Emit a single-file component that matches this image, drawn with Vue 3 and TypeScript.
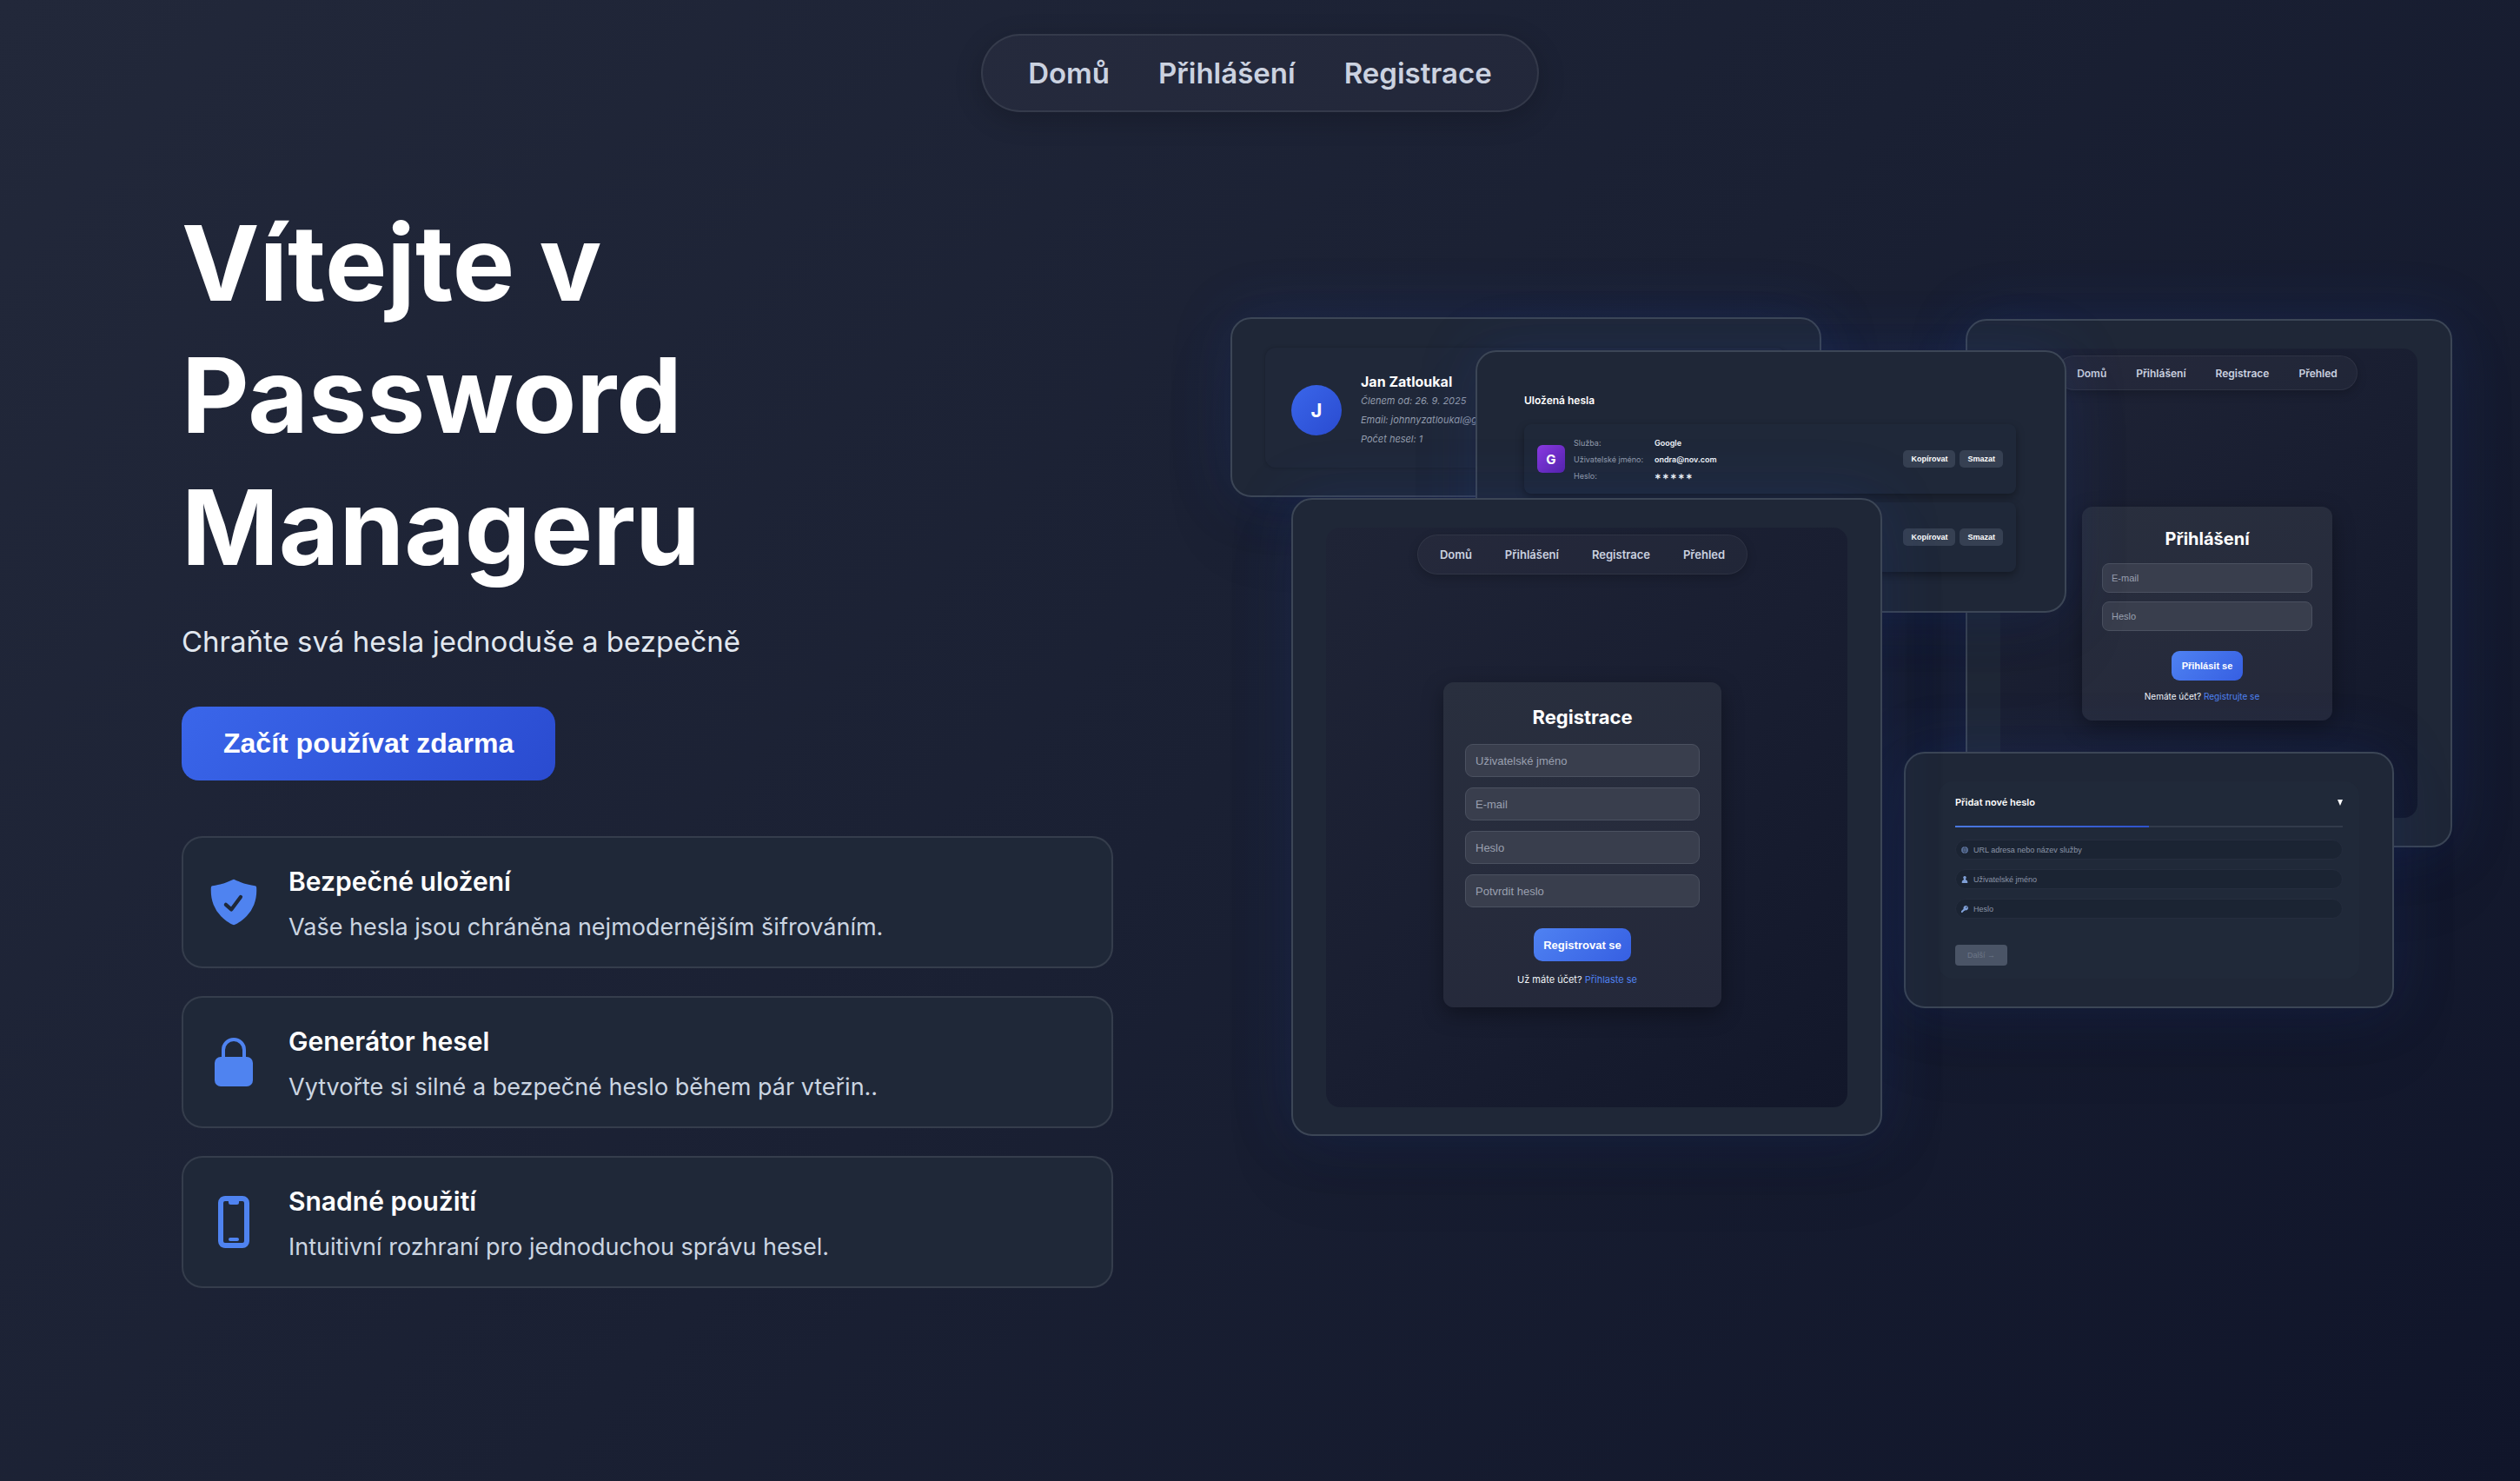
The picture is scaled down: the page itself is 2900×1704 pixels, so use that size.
<script setup lang="ts">
interface Feature {
  icon: 'shield' | 'lock' | 'phone'
  title: string
  text: string
}

const navLinks: string[] = ['Domů', 'Přihlášení', 'Registrace']
const appLinks: string[] = [...navLinks, 'Přehled']

const features: Feature[] = [
  { icon: 'shield', title: 'Bezpečné uložení', text: 'Vaše hesla jsou chráněna nejmodernějším šifrováním.' },
  { icon: 'lock', title: 'Generátor hesel', text: 'Vytvořte si silné a bezpečné heslo během pár vteřin..' },
  { icon: 'phone', title: 'Snadné použití', text: 'Intuitivní rozhraní pro jednoduchou správu hesel.' },
]

const registerFields: string[] = ['Uživatelské jméno', 'E-mail', 'Heslo', 'Potvrdit heslo']
const loginFields: string[] = ['E-mail', 'Heslo']
</script>

<template>
  <div class="page">
    <header class="top">
      <nav class="pill">
        <a v-for="link in navLinks" :key="link" href="#">{{ link }}</a>
      </nav>
    </header>

    <main class="hero">
      <section class="intro">
        <h1>Vítejte v Password Manageru</h1>
        <p class="lead">Chraňte svá hesla jednoduše a bezpečně</p>
        <button type="button" class="cta">Začít používat zdarma</button>

        <ul class="features">
          <li v-for="f in features" :key="f.title" class="feature">
            <svg v-if="f.icon === 'shield'" class="feature-icon" viewBox="0 0 512 512" aria-hidden="true">
              <path fill="currentColor" d="M479.07 111.36a16 16 0 00-13.15-14.74c-86.5-15.52-122.61-26.74-203.33-63.2a16 16 0 00-13.18 0C168.69 69.88 132.58 81.1 46.08 96.62a16 16 0 00-13.15 14.74c-3.85 61.11 4.36 118.05 24.43 169.24A349.47 349.47 0 00129 393.11c53.47 56.73 110.24 81.37 121.07 85.73a16 16 0 0012 0c10.83-4.36 67.6-29 121.07-85.73A349.47 349.47 0 00454.64 280.6c20.07-51.19 28.28-108.13 24.43-169.24z" />
              <path fill="none" stroke="#1f2838" stroke-width="36" stroke-linecap="round" stroke-linejoin="round" d="M178 280l54 48 92-124" />
            </svg>
            <svg v-else-if="f.icon === 'lock'" class="feature-icon" viewBox="0 0 60 60" aria-hidden="true">
              <path fill="none" stroke="currentColor" stroke-width="4" d="M18 26V16a12 12 0 0 1 24 0v10" />
              <rect x="8" y="24" width="44" height="34" rx="7" fill="currentColor" />
            </svg>
            <svg v-else class="feature-icon" viewBox="0 0 60 60" aria-hidden="true">
              <rect x="15" y="3" width="30" height="54" rx="5" fill="none" stroke="currentColor" stroke-width="6" />
              <path fill="currentColor" d="M22 5h16c-2 0-2 1.500-2 2.500a2.500 2.500 0 0 1-2.500 2.500h-7a2.500 2.500 0 0 1-2.500-2.500C24 6.500 24 5 22 5z" />
              <rect x="24" y="48" width="12" height="4" rx="2" fill="currentColor" />
            </svg>
            <div>
              <h2>{{ f.title }}</h2>
              <p>{{ f.text }}</p>
            </div>
          </li>
        </ul>
      </section>

      <section class="stage" aria-label="Ukázky aplikace">
        <article class="window profile">
          <div class="profile-inner">
            <span class="avatar">J</span>
            <div class="profile-text">
              <h3>Jan Zatloukal</h3>
              <p>Členem od: 26. 9. 2025</p>
              <p>Email: johnnyzatloukal@g</p>
              <p>Počet hesel: 1</p>
            </div>
          </div>
        </article>

        <article class="window login">
          <div class="screen">
            <nav class="pill small">
              <a v-for="link in appLinks" :key="link" href="#">{{ link }}</a>
            </nav>
            <form class="panel" @submit.prevent>
              <h3>Přihlášení</h3>
              <input v-for="f in loginFields" :key="f" type="text" :placeholder="f" :aria-label="f" />
              <button type="submit">Přihlásit se</button>
              <p>Nemáte účet? <a href="#">Registrujte se</a></p>
            </form>
          </div>
        </article>

        <article class="window vault">
          <h3>Uložená hesla</h3>
          <div class="entry">
            <span class="logo">G</span>
            <dl>
              <dt>Služba:</dt>
              <dd>Google</dd>
              <dt>Uživatelské jméno:</dt>
              <dd>ondra@nov.com</dd>
              <dt>Heslo:</dt>
              <dd class="stars"><span v-for="n in 5" :key="n">∗</span></dd>
            </dl>
            <button type="button">Kopírovat</button>
            <button type="button">Smazat</button>
          </div>
          <div class="entry">
            <dl></dl>
            <button type="button">Kopírovat</button>
            <button type="button">Smazat</button>
          </div>
        </article>

        <article class="window add">
          <form class="add-inner" @submit.prevent>
            <div class="add-head">
              <h3>Přidat nové heslo</h3>
              <svg viewBox="0 0 6 7" width="6" height="7" aria-hidden="true"><path d="M0 0h6L3 7z" fill="#fff" /></svg>
            </div>
            <div class="progress"><span></span></div>
            <label class="field">
              <svg viewBox="0 0 16 16" aria-hidden="true">
                <circle cx="8" cy="8" r="7.500" fill="#7590c4" />
                <path d="M8 1v14M1 8h14M2 4.500h12M2 11.500h12M8 1C3.500 5 3.500 11 8 15c4.500-4 4.500-10 0-14" fill="none" stroke="#1b2433" />
              </svg>
              <input type="text" placeholder="URL adresa nebo název služby" aria-label="URL adresa nebo název služby" />
            </label>
            <label class="field">
              <svg viewBox="0 0 16 16" aria-hidden="true">
                <path d="M8 0a3.500 3.500 0 0 0-2 6.400L5.500 8.500C3 9.500 1.500 11 1.500 13.500V16h13v-2.500c0-2.500-1.500-4-4-5L10 6.400A3.500 3.500 0 0 0 8 0z" fill="#7f9fd6" />
              </svg>
              <input type="text" placeholder="Uživatelské jméno" aria-label="Uživatelské jméno" />
            </label>
            <label class="field">
              <svg viewBox="0 0 16 16" aria-hidden="true">
                <path fill-rule="evenodd" d="M10.500 0a5.500 5.500 0 0 0-5.200 7.300L0 12.600V16h3.500v-2h2v-2h2l1.200-1.300A5.500 5.500 0 1 0 10.500 0zm1.500 2.600a1.500 1.500 0 1 1 0 3 1.500 1.500 0 0 1 0-3z" fill="#7f9fd6" />
              </svg>
              <input type="text" placeholder="Heslo" aria-label="Heslo" />
            </label>
            <button type="button" disabled>Další →</button>
          </form>
        </article>

        <article class="window register">
          <div class="screen">
            <nav class="pill small">
              <a v-for="link in appLinks" :key="link" href="#">{{ link }}</a>
            </nav>
            <form class="panel" @submit.prevent>
              <h3>Registrace</h3>
              <input v-for="f in registerFields" :key="f" type="text" :placeholder="f" :aria-label="f" />
              <button type="submit">Registrovat se</button>
              <p>Už máte účet? <a href="#">Přihlaste se</a></p>
            </form>
          </div>
        </article>
      </section>
    </main>
  </div>
</template>

<style>
body {
  margin: 0;
  background: #12172a;
}
</style>

<style scoped>
* {
  box-sizing: border-box;
}

h1,
h2,
h3,
p,
ul,
dl,
dd {
  margin: 0;
  padding: 0;
}

a {
  color: inherit;
  text-decoration: none;
}

button,
input {
  font-family: 'Liberation Sans', Arial, sans-serif;
}

.page {
  min-height: 100vh;
  padding-top: 39px;
  font-family: Inter, 'Noto Sans', sans-serif;
  color: #fff;
  background: linear-gradient(135deg, #22283a 0%, #1a2033 50%, #10152a 100%);
}

.top {
  display: flex;
  justify-content: center;
}

.pill {
  display: flex;
  align-items: center;
  gap: 56px;
  height: 90px;
  padding: 0 52px;
  border: 2px solid rgba(255, 255, 255, 0.08);
  border-radius: 45px;
  background: rgba(255, 255, 255, 0.03);
  box-shadow: 0 8px 32px rgba(0, 0, 0, 0.2);
  font-size: 33px;
  font-weight: 600;
  color: #cbd2e0;
}

.hero {
  display: grid;
  grid-template-columns: 1072fr 1406fr;
  gap: 135px;
  align-items: start;
  padding: 98px 78px 80px 209px;
}

h1 {
  max-width: 640px;
  font-size: 120px;
  line-height: 152px;
  font-weight: 700;
}

.lead {
  margin-top: 28px;
  font-size: 33px;
  line-height: 54px;
  color: #e2e8f0;
}

.cta {
  display: block;
  margin-top: 48px;
  height: 85px;
  padding: 0 48px;
  border: 0;
  border-radius: 20px;
  background: linear-gradient(135deg, #3a66ea, #2a4bd0);
  color: #fff;
  font-size: 32px;
  font-weight: 700;
}

.features {
  display: flex;
  flex-direction: column;
  gap: 32px;
  margin-top: 64px;
  list-style: none;
}

.feature {
  display: flex;
  align-items: flex-start;
  gap: 33px;
  padding: 28px 28px 23px;
  border: 2px solid rgba(255, 255, 255, 0.1);
  border-radius: 24px;
  background: #1f2838;
}

.feature-icon {
  flex: none;
  width: 60px;
  height: 60px;
  margin-top: 16px;
  color: #4f83f0;
}

.feature h2 {
  font-size: 30px;
  line-height: 44px;
  font-weight: 600;
}

.feature p {
  margin-top: 9px;
  font-size: 27px;
  line-height: 44px;
  color: #cbd5e1;
}

.stage {
  position: relative;
  height: 942px;
  margin-top: 138px;
}

.window {
  position: absolute;
  border: 2px solid #3c4656;
  border-radius: 24px;
  background: #1f2737;
  box-shadow:
    0 0 70px rgba(37, 80, 190, 0.18),
    0 40px 80px rgba(0, 0, 0, 0.12);
}

.profile {
  top: 0;
  left: 0;
  width: 680px;
  height: 207px;
  padding: 33px 38px;
}

.profile-inner {
  display: flex;
  align-items: center;
  gap: 22px;
  height: 138px;
  padding: 6px 30px 0;
  border-radius: 12px;
  background: #202839;
  box-shadow: 0 0 4px rgba(0, 0, 0, 0.2);
}

.avatar {
  display: flex;
  align-items: center;
  justify-content: center;
  width: 58px;
  height: 58px;
  border-radius: 50%;
  background: linear-gradient(135deg, #3a66ea, #2a4bd0);
  font-size: 22px;
  font-weight: 700;
}

.profile-text h3 {
  font-size: 16px;
  line-height: 22px;
  font-weight: 700;
}

.profile-text p {
  font-size: 11px;
  line-height: 22px;
  font-style: italic;
  color: #949dae;
}

.vault {
  top: 38px;
  left: 282px;
  width: 680px;
  height: 302px;
  padding: 46px 56px 46px 54px;
}

.vault h3 {
  margin-bottom: 17px;
  font-size: 12px;
  line-height: 20px;
  font-weight: 600;
}

.entry {
  display: flex;
  align-items: center;
  gap: 5px;
  height: 80px;
  margin-bottom: 10px;
  padding: 0 15px;
  border-radius: 8px;
  background: #1f2839;
  box-shadow: 0 4px 10px rgba(0, 0, 0, 0.35);
}

.logo {
  display: flex;
  align-items: center;
  justify-content: center;
  width: 32px;
  height: 32px;
  margin-right: 5px;
  border-radius: 6px;
  background: linear-gradient(135deg, #8a3ae2, #5522ad);
  font-size: 15px;
  font-weight: 700;
}

.entry dl {
  display: grid;
  grid-template-columns: 93px auto;
  flex: 1;
  justify-content: start;
  font-size: 9px;
  line-height: 19px;
}

.entry dt {
  color: #949dae;
}

.entry dd {
  font-weight: 600;
  color: #f1f5f9;
}

.stars {
  display: flex;
  gap: 2px;
}

.stars span {
  width: 7px;
  text-align: center;
}

.entry button {
  height: 20px;
  padding: 0 9px;
  border: 0;
  border-radius: 5px;
  background: #364052;
  color: #fff;
  font-size: 9px;
  font-weight: 700;
}

.register {
  top: 208px;
  left: 70px;
  width: 680px;
  height: 734px;
  padding: 32px 38px 31px;
}

.login {
  top: 2px;
  left: 846px;
  width: 560px;
  height: 608px;
  padding: 32px 38px;
}

.screen {
  display: flex;
  flex-direction: column;
  align-items: center;
  height: 100%;
  border-radius: 16px;
  background: linear-gradient(135deg, #1f2436, #191e31 50%, #12172a);
}

.register .screen {
  padding: 8px 10px 0 0;
}

.login .screen {
  padding: 8px 4px 0 0;
}

.pill.small {
  border-width: 1px;
  border-color: rgba(255, 255, 255, 0.06);
  box-shadow: 0 4px 12px rgba(0, 0, 0, 0.2);
}

.register .pill {
  gap: 38px;
  height: 46px;
  padding: 0 25px;
  font-size: 13px;
}

.login .pill {
  gap: 34px;
  height: 40px;
  padding: 0 22px;
  font-size: 12px;
}

.panel {
  display: flex;
  flex-direction: column;
  align-items: center;
  border-radius: 12px;
  background: linear-gradient(160deg, #292f3e, #24283a);
  box-shadow: 0 8px 24px rgba(0, 0, 0, 0.35);
}

.panel input {
  width: 100%;
  border: 1px solid #4b5160;
  background: #393e4d;
  color: #fff;
}

.panel input::placeholder {
  color: #9aa0b0;
}

.panel button {
  border: 0;
  background: linear-gradient(135deg, #4f82f2, #365fe2);
  color: #fff;
  font-weight: 700;
}

.panel p {
  color: #f1f5f9;
}

.panel p a {
  color: #4f82f2;
}

.register .panel {
  width: 320px;
  margin-top: 124px;
  padding: 25px 25px 20px;
}

.register .panel h3 {
  margin-bottom: 16px;
  font-size: 22px;
  line-height: 30px;
}

.register .panel input {
  height: 38px;
  margin-bottom: 12px;
  padding: 0 11px;
  border-radius: 9px;
  font-size: 13px;
}

.register .panel button {
  height: 38px;
  margin-top: 12px;
  padding: 0 11px;
  border-radius: 10px;
  font-size: 13px;
}

.register .panel p {
  margin-top: 9px;
  padding-right: 12px;
  font-size: 11px;
  line-height: 24px;
}

.login .panel {
  width: 288px;
  margin-top: 134px;
  padding: 24px 23px 17px;
}

.login .panel h3 {
  margin-bottom: 15px;
  font-size: 20px;
  line-height: 26px;
}

.login .panel input {
  height: 34px;
  margin-bottom: 10px;
  padding: 0 10px;
  border-radius: 8px;
  font-size: 11px;
}

.login .panel button {
  height: 34px;
  margin-top: 13px;
  padding: 0 12px;
  border-radius: 9px;
  font-size: 11px;
}

.login .panel p {
  margin-top: 7px;
  padding-right: 12px;
  font-size: 10px;
  line-height: 22px;
}

.add {
  top: 500px;
  left: 775px;
  width: 564px;
  padding: 32px 38px;
}

.add-inner {
  display: flex;
  flex-direction: column;
  align-items: flex-start;
  height: 227px;
  padding: 15px 19px;
  border-radius: 16px;
  background: #202939;
}

.add-head {
  display: flex;
  align-items: center;
  justify-content: space-between;
  width: 100%;
  height: 18px;
}

.add-head h3 {
  font-size: 11px;
  font-weight: 600;
}

.progress {
  width: 100%;
  height: 2px;
  margin: 18px 0 14px;
  background: #323b4b;
}

.progress span {
  display: block;
  width: 50%;
  height: 100%;
  background: linear-gradient(90deg, #4a78e0, #2f52cc);
}

.field {
  display: flex;
  align-items: center;
  gap: 6px;
  width: 100%;
  height: 23px;
  margin-bottom: 11px;
  padding: 0 6px;
  border: 1px solid #252d3e;
  border-radius: 12px;
  background: #1b2433;
}

.field svg {
  flex: none;
  width: 8px;
  height: 8px;
}

.field input {
  flex: 1;
  padding: 0;
  border: 0;
  background: none;
  color: #fff;
  font-size: 9px;
}

.field input::placeholder {
  color: #8b95a8;
}

.add-inner button {
  height: 24px;
  margin-top: 19px;
  padding: 0 14px;
  border: 0;
  border-radius: 4px;
  background: #4a5466;
  color: #6d7788;
  font-size: 9px;
}
</style>
